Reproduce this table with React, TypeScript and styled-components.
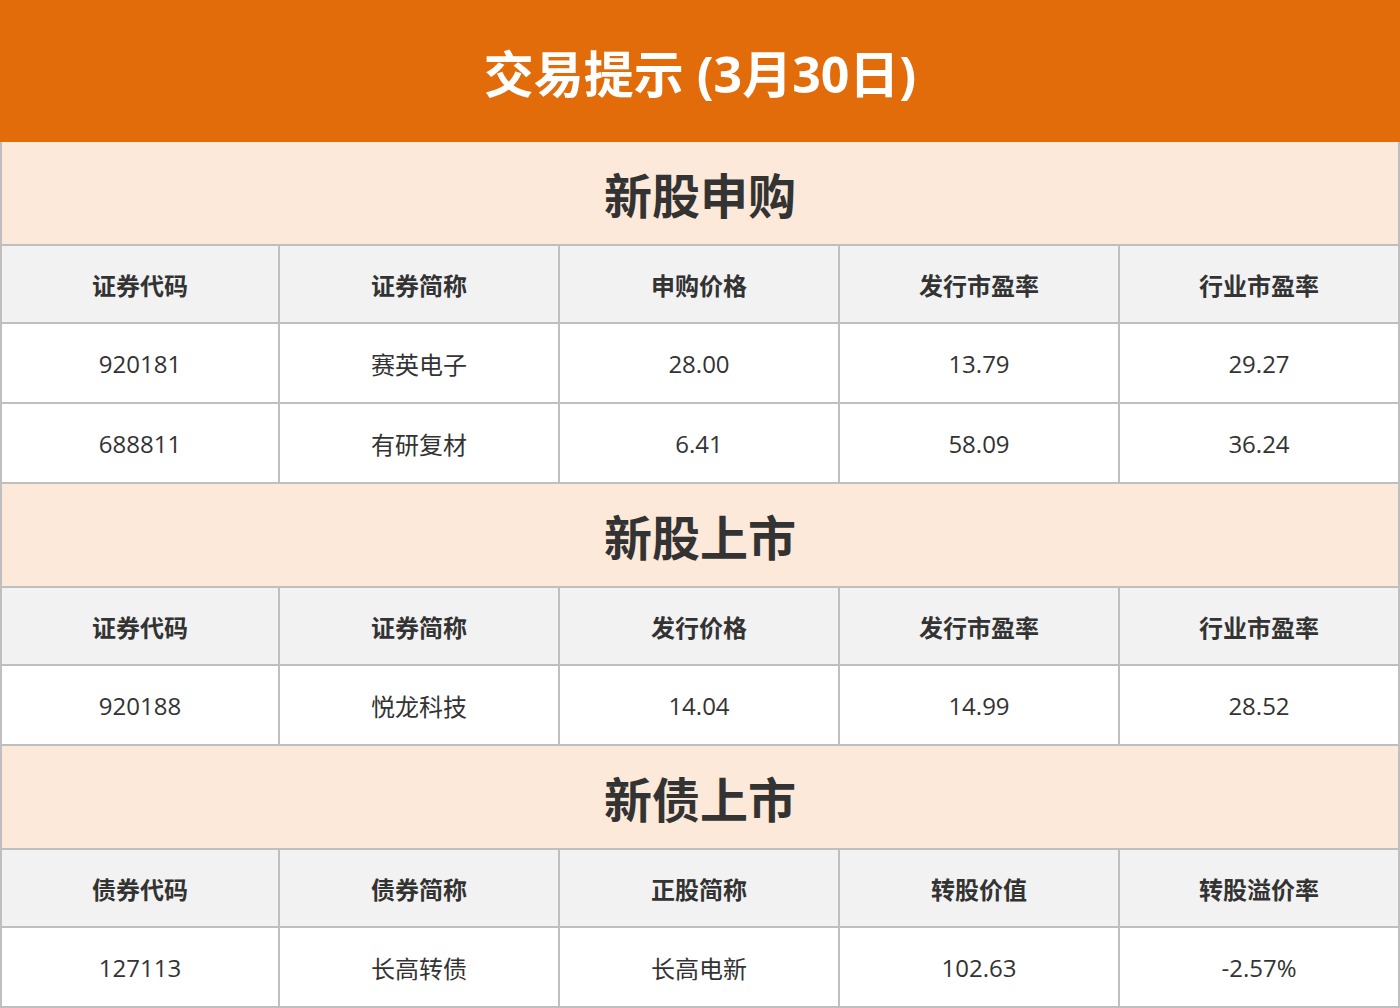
import styled, { createGlobalStyle } from "styled-components";

const GlobalStyle = createGlobalStyle`
  html, body {
    margin: 0;
    padding: 0;
    background: #ffffff;
  }

  body {
    font-family: "Open Sans", "Noto Sans CJK SC", sans-serif;
    color: #333333;
  }
`;

const Page = styled.div`
  width: 1400px;
`;

const Banner = styled.header`
  height: 142px;
  box-sizing: border-box;
  padding-top: 6px;
  background: #e26b0a;
  display: flex;
  align-items: center;
  justify-content: center;
`;

const BannerTitle = styled.h1`
  margin: 0;
  font-size: 50px;
  font-weight: 700;
  color: #ffffff;
  line-height: 1;
`;

const Section = styled.section`
  display: grid;
  grid-template-columns: 276px repeat(4, 1fr);
  gap: 2px;
  padding: 0 2px 2px;
  background: #bfbfbf;
`;

const SectionTitle = styled.h2`
  grid-column: 1 / -1;
  margin: 0;
  height: 102px;
  background: #fde9d9;
  display: flex;
  align-items: center;
  justify-content: center;
  font-size: 48px;
  font-weight: 700;
  color: #333333;
`;

const Cell = styled.div<{ $head?: boolean }>`
  height: ${({ $head }) => ($head ? 76 : 78)}px;
  background: ${({ $head }) => ($head ? "#f2f2f2" : "#ffffff")};
  display: flex;
  align-items: center;
  justify-content: center;
  font-size: 24px;
  font-weight: ${({ $head }) => ($head ? 700 : 400)};
  color: #333333;
`;

type Block = {
  title: string;
  columns: string[];
  rows: string[][];
};

const blocks: Block[] = [
  {
    title: "新股申购",
    columns: ["证券代码", "证券简称", "申购价格", "发行市盈率", "行业市盈率"],
    rows: [
      ["920181", "赛英电子", "28.00", "13.79", "29.27"],
      ["688811", "有研复材", "6.41", "58.09", "36.24"],
    ],
  },
  {
    title: "新股上市",
    columns: ["证券代码", "证券简称", "发行价格", "发行市盈率", "行业市盈率"],
    rows: [["920188", "悦龙科技", "14.04", "14.99", "28.52"]],
  },
  {
    title: "新债上市",
    columns: ["债券代码", "债券简称", "正股简称", "转股价值", "转股溢价率"],
    rows: [["127113", "长高转债", "长高电新", "102.63", "-2.57%"]],
  },
];

export default function App() {
  return (
    <Page>
      <GlobalStyle />
      <Banner>
        <BannerTitle>交易提示 (3月30日)</BannerTitle>
      </Banner>
      {blocks.map((block) => (
        <Section key={block.title}>
          <SectionTitle>{block.title}</SectionTitle>
          {block.columns.map((col) => (
            <Cell $head key={col}>
              {col}
            </Cell>
          ))}
          {block.rows.map((row) =>
            row.map((value, i) => <Cell key={row[0] + i}>{value}</Cell>),
          )}
        </Section>
      ))}
    </Page>
  );
}
